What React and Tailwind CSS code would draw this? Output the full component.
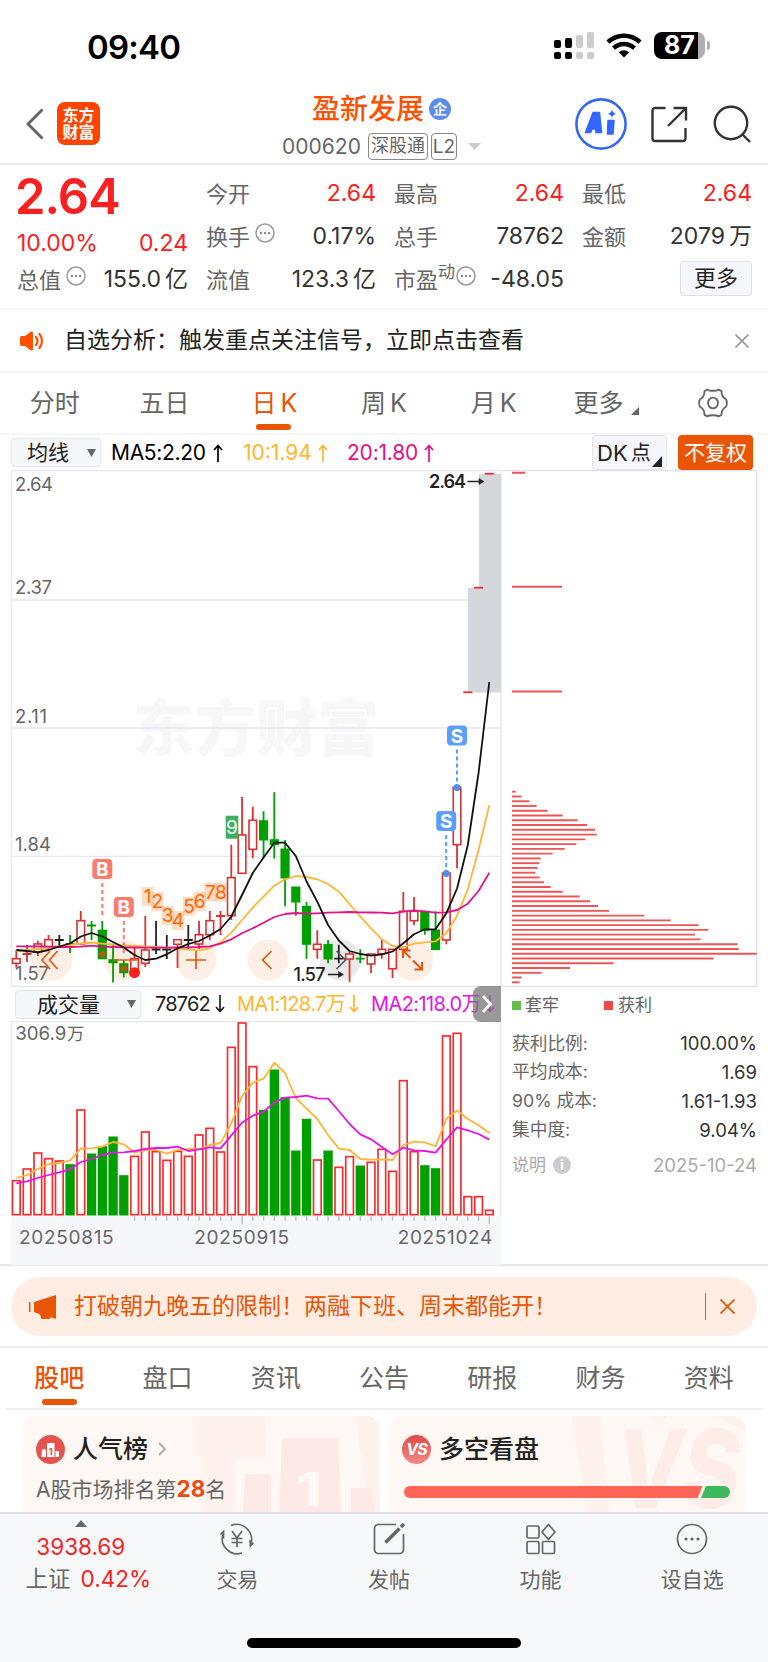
import React from 'react';

const UP = '#d93232';
const DOWN = '#00a000';
const FLAT = '#222222';

const STEP = 10.75;
const candleX = (i) => 16.3 + i * STEP;

// [kind, high, top, bottom, low] - u: up, d: down, x: flat
const candles = [
  ['u', 950, 958.7, 963.3, 967.7], ['u', 945, 954, 954, 962], ['u', 940.7, 944, 951.7, 956], ['u', 935, 939.7, 946.7, 950],
  ['x', 935, 940, 940, 948], ['d', 935, 944, 944, 953], ['u', 911, 920.7, 944, 944], ['d', 921, 925.5, 925.5, 940],
  ['d', 921, 930.5, 958.5, 958.5], ['d', 945, 960, 962.5, 982.5], ['d', 960, 964, 972.5, 977.5], ['u', 944.7, 958.7, 969, 972],
  ['u', 916, 950, 963.3, 967], ['x', 921, 949.5, 949.5, 954], ['x', 935, 949.5, 949.5, 959], ['u', 939.7, 939.7, 944.3, 968],
  ['x', 925, 940, 940, 949], ['u', 921, 934.7, 944, 949], ['u', 911, 920.7, 934.7, 940], ['u', 911, 916, 916, 935],
  ['u', 844.7, 877.7, 915.7, 920], ['u', 797, 835, 873.3, 873.3], ['u', 806.7, 820.3, 849.3, 858.3], ['d', 811.3, 821, 839.7, 858.3],
  ['d', 792.3, 840, 844.3, 858.7], ['d', 840, 849.3, 877.7, 906.3], ['d', 887.3, 887.3, 901.7, 915.7], ['d', 902, 906.7, 944, 958.7],
  ['u', 930.3, 944.3, 949.3, 958.7], ['d', 940, 944.7, 958.7, 963.3], ['x', 944.7, 958.7, 958.7, 963.3], ['u', 951.7, 954, 959, 982.3],
  ['d', 949.3, 958.7, 958.7, 963.3], ['u', 954, 954, 964, 973], ['u', 939.7, 949.3, 953.7, 958.7], ['u', 949.3, 949.3, 968.7, 978],
  ['u', 892, 911.3, 949.3, 949.3], ['u', 897, 911.3, 920.7, 925.3], ['d', 911.7, 911.7, 930, 934.7], ['d', 911.3, 930.3, 949.3, 949.3],
  ['u', 873, 873, 940, 944.3], ['u', 787.3, 787.3, 844.7, 868.3], ['u', 692.3, 692.3, 692.3, 692.3], ['u', 587.7, 587.7, 587.7, 587.7],
  ['u', 473.7, 473.7, 473.7, 473.7],
];

const ma5 = [950, 951, 952.3, 950, 946.5, 943.5, 936.5, 933, 936.5, 942, 947.5, 955, 960, 958.7, 954.3, 948.3, 944, 941, 935.5, 929, 916.5, 895, 873, 857.5, 842.7, 842.7, 856, 881.5, 901.7, 925, 940.5, 951, 954, 955.7, 954.3, 951.5, 943.3, 934.3, 929.3, 929.3, 913.3, 888.5, 845, 773, 682];
const ma10 = [951, 950, 949, 947.7, 946.3, 945, 943.5, 942.5, 943.7, 944.5, 945.5, 946, 946.5, 947, 947.7, 948.7, 949.7, 950.3, 948, 942.3, 932.7, 920, 907.5, 896.7, 885.7, 879.3, 876, 877, 879.3, 884, 891.7, 904, 916.7, 928.3, 939.3, 946, 947, 943.7, 942.3, 941.3, 933.3, 915.7, 889.3, 850, 805.3];
const ma20 = [946.3, 946.3, 946.3, 946.7, 947, 947, 946.7, 945.7, 946.7, 947, 947.3, 947.5, 947.7, 947.7, 947.7, 947.3, 947.3, 947, 946.3, 943.7, 939.3, 933.3, 928.3, 922.7, 917, 914, 913, 913.7, 913.3, 912.7, 912.3, 912, 912.3, 912.5, 912.7, 913.3, 911.7, 910.3, 911.3, 912.7, 912.3, 910, 903.7, 891, 872.7];

const chips = [47, 65, 88, 110, 143, 188, 233, 261, 285, 290, 256, 229, 194, 158, 122, 118, 113, 106, 119, 132, 152, 188, 239, 270, 294, 327, 433, 512, 596, 625, 585, 602, 713, 716, 770, 641, 341, 210, 125, 65, 59];

const volumes = [600, 565, 517, 534, 541, 553, 388, 521, 499, 470, 586, 527, 454, 513, 539, 512, 527, 463, 443, 514, 200, 127, 258, 390, 269, 352, 512, 417, 538, 512, 560, 528, 557, 545, 506, 572, 300, 513, 556, 565, 166, 158, 648, 648, 689];
const fallingDays = [5, 7, 8, 9, 10, 23, 24, 25, 26, 27, 29, 32, 38, 39];
const volMa1 = [594, 585, 567, 552, 549, 541, 506, 505, 500, 486, 493, 518, 510, 510, 521, 510, 507, 507, 495, 489, 430, 348, 308, 296, 248, 279, 354, 386, 417, 465, 506, 510, 537, 539, 538, 540, 495, 485, 487, 499, 417, 391, 417, 436, 459];
const volMa2 = [610, 604, 594, 585, 577, 568, 546, 537, 525, 518, 517, 513, 507, 504, 504, 500, 513, 508, 502, 505, 466, 428, 407, 395, 368, 353, 351, 347, 355, 356, 393, 432, 463, 478, 501, 523, 503, 511, 513, 518, 479, 442, 451, 462, 479];

const sequence = [
  ['1', 141.7, 887], ['2', 151.2, 892], ['3', 161.7, 906], ['4', 172.2, 911],
  ['5', 183, 896.7], ['6', 193.7, 892], ['7', 204.4, 882.5], ['8', 215, 882.5],
];

const toPoints = (values, getX) => values.map((y, i) => `${getX(i)},${y}`).join(' ');

const StatusBar = () => (
  <div className="flex h-[92px] items-start justify-between pl-[87px] pr-[58px] pt-[30px]">
    <span className="text-[33px] font-semibold leading-[34px] tracking-[-0.8px] text-black">09:40</span>
    <div className="flex items-center gap-[12px] pt-[2px]">
      <svg width="40" height="27" viewBox="0 0 40 27">
        <g fill="#000">
          <rect x="0" y="8" width="7" height="8" rx="2" />
          <rect x="11" y="6" width="7" height="10" rx="2" />
          <rect x="0" y="20" width="7" height="7" rx="2" />
          <rect x="11" y="20" width="7" height="7" rx="2" />
        </g>
        <g fill="#ccc">
          <rect x="22" y="3" width="7" height="13" rx="2" />
          <rect x="33" y="0" width="7" height="16" rx="2" />
          <rect x="22" y="20" width="7" height="7" rx="2" />
          <rect x="33" y="20" width="7" height="7" rx="2" />
        </g>
      </svg>
      <svg width="36" height="27" viewBox="0 0 36 27" fill="none" stroke="#000" strokeWidth="4.6">
        <path d="M2 10.2a23 23 0 0 1 32 0" />
        <path d="M7.6 16.2a15 15 0 0 1 20.8 0" />
        <path d="M18 25.5l-5.2-5.2a7.4 7.4 0 0 1 10.4 0z" fill="#000" stroke="none" />
      </svg>
      <div className="flex items-center gap-[2px]">
        <div className="flex h-[27px] w-[51px] items-center justify-center rounded-[8px] bg-[linear-gradient(90deg,#000_87%,#b0b0b0_87%)] text-[25px] font-bold leading-none text-white">
          87
        </div>
        <div className="h-[9px] w-[3px] rounded-r-full bg-[#b0b0b0]" />
      </div>
    </div>
  </div>
);

const Header = () => (
  <header className="grid h-[73px] grid-cols-[1fr_auto_1fr] border-b-2 border-[#e9e9eb] pl-[26px] pr-[17px]">
    <div className="flex items-start gap-[13px] pt-[10px]">
      <svg className="mt-[6px]" width="18" height="32" viewBox="0 0 18 32" fill="none" stroke="#666" strokeWidth="3">
        <path d="M16.5 1.5L2 16l14.5 14.5" />
      </svg>
      <div className="flex h-[43px] w-[43px] flex-col items-center justify-center rounded-[8px] bg-[#ff4400] text-[16px] font-bold leading-[17px] text-white">
        <span>东方</span>
        <span>财富</span>
      </div>
    </div>
    <div className="mr-[14px] flex flex-col items-center">
      <div className="flex h-[34px] items-center gap-[5px] text-[28px] font-medium leading-none text-[#ff5000]">
        盈新发展
        <span className="flex h-[22px] w-[22px] items-center justify-center rounded-full bg-[#5b8def] text-[14px] font-bold text-white">企</span>
      </div>
      <div className="flex h-[40px] items-center text-[21px] leading-none text-[#666]">
        <span>000620</span>
        <span className="ml-[7px] flex h-[27px] w-[60px] items-center justify-center rounded-[4px] border-[1.5px] border-[#888] text-[18px]">深股通</span>
        <span className="ml-[3px] flex h-[27px] w-[26px] items-center justify-center rounded-[4px] border-[1.5px] border-[#888] text-[19px]">L2</span>
        <svg className="ml-[11px]" width="13" height="7" viewBox="0 0 13 7"><path d="M0 0h13L6.5 7z" fill="#ccc" /></svg>
      </div>
    </div>
    <div className="flex items-start justify-end pt-[6px]">
      <svg width="52" height="52" viewBox="0 0 52 52">
        <circle cx="26" cy="26" r="24.6" fill="#fff" stroke="#3366ff" strokeWidth="2.6" />
        <path d="M10.500 34.500L18 14.500h6.500L26.500 34.500h-5.500l-.3-3.500h-3.700l-1.400 3.500zM18.700 26.500h1.800l-.3-5z" fill="#3366ff" fillRule="evenodd" stroke="#3366ff" strokeWidth="1.500" strokeLinejoin="round" />
        <path d="M33 22.500h6L38 36h-5.500z" fill="#3366ff" stroke="#3366ff" strokeWidth="1.500" strokeLinejoin="round" />
        <path d="M37 11.500c.8 2.700 1.600 3.500 4.200 4.300-2.600.8-3.400 1.600-4.200 4.300-.8-2.700-1.600-3.500-4.200-4.300 2.600-.8 3.400-1.600 4.200-4.300z" fill="#3366ff" />
      </svg>
      <svg className="ml-[24px] mt-[8px]" width="37" height="37" viewBox="0 0 37 37" fill="none" stroke="#333" strokeWidth="2.4">
        <path d="M14.5 2H4a2.500 2.500 0 0 0-2.500 2.500v28A2.500 2.500 0 0 0 4 35h28a2.500 2.500 0 0 0 2.500-2.500V22" />
        <path d="M22.500 2h12.500v12.500M35 2L17 20" />
      </svg>
      <svg className="ml-[25px] mt-[7px]" width="38" height="38" viewBox="0 0 38 38" fill="none" stroke="#333" strokeWidth="2.4">
        <circle cx="18" cy="18" r="16.200" />
        <path d="M29 29l8 8" />
      </svg>
    </div>
  </header>
);

const MoreDot = () => (
  <svg className="mb-[8px] ml-[5px] shrink-0" width="20" height="20" viewBox="0 0 20 20">
    <circle cx="10" cy="10" r="9" fill="none" stroke="#999" strokeWidth="1.500" />
    <g fill="#888">
      <circle cx="6" cy="10" r="1.200" />
      <circle cx="10" cy="10" r="1.200" />
      <circle cx="14" cy="10" r="1.200" />
    </g>
  </svg>
);

const Stat = ({ label, sup, dots, value, unit, red }) => (
  <div className="flex h-[43px] items-center whitespace-nowrap leading-none">
    <span className="text-[22px] text-[#666]">{label}</span>
    {sup && <span className="-mr-[4px] mb-[14px] text-[17px] text-[#666]">{sup}</span>}
    {dots && <MoreDot />}
    <span className={`ml-auto text-[23px] ${red ? 'text-[#fa2020]' : 'text-[#333]'}`}>
      {value}
      {unit && <span className="ml-[4px]">{unit}</span>}
    </span>
  </div>
);

const Quote = () => (
  <section className="flex h-[145px] gap-[18px] border-b-2 border-[#f5f5f7] pl-[17px] pr-[16px] pt-[7px]">
    <div className="w-[171px]">
      <div className="-ml-[2px] flex h-[50px] items-center pb-[2px] text-[49px] font-semibold leading-none tracking-[-1px] text-[#fa2020]">2.64</div>
      <div className="flex h-[36px] items-center justify-between pt-[6px] text-[23px] leading-none text-[#fa2020]">
        <span>10.00%</span>
        <span>0.24</span>
      </div>
      <Stat label="总值" dots value="155.0" unit="亿" />
    </div>
    <div className="w-[170px]">
      <Stat label="今开" value="2.64" red />
      <Stat label="换手" dots value="0.17%" />
      <Stat label="流值" value="123.3" unit="亿" />
    </div>
    <div className="w-[170px]">
      <Stat label="最高" value="2.64" red />
      <Stat label="总手" value="78762" />
      <Stat label="市盈" sup="动" dots value="-48.05" />
    </div>
    <div className="w-[170px]">
      <Stat label="最低" value="2.64" red />
      <Stat label="金额" value="2079" unit="万" />
      <div className="flex h-[40px] items-center justify-end">
        <button className="h-[35px] w-[72px] rounded-[4px] border-[1.500px] border-[#dfe1ea] bg-[#f6f7fa] text-[22px] leading-none text-[#222]">更多</button>
      </div>
    </div>
  </section>
);

const Notice = () => (
  <section className="flex h-[63px] items-center border-b-2 border-[#f5f5f7] pl-[20px] pr-[19px]">
    <svg width="24" height="20" viewBox="0 0 24 20">
      <path d="M0 6.500Q0 5 1.500 5H5l6-4.500Q13 0 13 2v16q0 2-2 1.500L5 15H1.500Q0 15 0 13.500z" fill="#ff5000" />
      <path d="M16 6q3 4 0 8M19.500 3q5 7 0 14" fill="none" stroke="#ff5000" strokeWidth="2.200" strokeLinecap="round" />
    </svg>
    <p className="ml-[20px] text-[23px] leading-none text-[#222]">自选分析：触发重点关注信号，立即点击查看</p>
    <svg className="ml-auto" width="14" height="14" viewBox="0 0 14 14" stroke="#999" strokeWidth="1.600"><path d="M.5.5l13 13M13.500.5l-13 13" /></svg>
  </section>
);

const PeriodTabs = () => (
  <nav className="grid h-[62px] grid-cols-7 border-b-2 border-[#f5f5f7] text-[25px] leading-none text-[#666]">
    <span className="flex items-center justify-center">分时</span>
    <span className="flex items-center justify-center">五日</span>
    <span className="relative flex items-center justify-center gap-[4px] text-[#ea5504]">
      日<span>K</span>
      <span className="absolute bottom-[3px] left-[37px] h-[6px] w-[35px] rounded-[3px] bg-[#ea5504]" />
    </span>
    <span className="flex items-center justify-center gap-[4px]">周<span>K</span></span>
    <span className="flex items-center justify-center gap-[4px]">月<span>K</span></span>
    <span className="flex items-center justify-center gap-[8px] pl-[6px]">
      更多
      <svg className="mt-[15px]" width="8" height="8" viewBox="0 0 8 8"><path d="M8 0v8H0z" fill="#666" /></svg>
    </span>
    <span className="flex items-center justify-center">
      <svg width="30" height="30" viewBox="0 0 30 28" preserveAspectRatio="none" fill="none" stroke="#666" strokeWidth="1.800" strokeLinejoin="round">
        <path d="M9.500 1.500c1.500 1.500 9.500 1.500 11 0l3 1.500c0 3 1.500 6 4.500 7.500 1 2 1 5 0 7-3 1.500-4.500 4.500-4.500 7.500l-3 1.500c-1.500-1.500-9.500-1.500-11 0l-3-1.500c0-3-1.500-6-4.500-7.500-1-2-1-5 0-7C5 9 6.500 6 6.500 3z" />
        <circle cx="15" cy="14" r="5" />
      </svg>
    </span>
  </nav>
);

const Arrow = ({ down }) => (
  <svg className={down ? 'rotate-180' : ''} width="10" height="18" viewBox="0 0 10 18" fill="none" stroke="currentColor" strokeWidth="1.700">
    <path d="M5 18V1.500M1 6l4-4.500L9 6" />
  </svg>
);

const Indicators = () => (
  <div className="flex h-[35px] items-center pl-[11px] pr-[15px] text-[21px] leading-none">
    <div className="flex h-[29px] w-[90px] items-center justify-between rounded-[4px] border-[1.500px] border-[#e2e4ec] bg-[#f6f7fa] pl-[15px] pr-[4px] text-[#222]">
      均线
      <svg width="9" height="8" viewBox="0 0 9 8"><path d="M0 0h9L4.500 8z" fill="#666" /></svg>
    </div>
    <div className="ml-[10px] flex w-[132px] items-center gap-[7px] text-black"><span className="tracking-[-0.3px]">MA5:2.20</span><Arrow /></div>
    <div className="flex w-[104px] items-center gap-[6px] text-[#ffb52e]"><span>10:1.94</span><Arrow /></div>
    <div className="flex items-center gap-[6px] text-[#e60f88]"><span className="tracking-[-0.2px]">20:1.80</span><Arrow /></div>
    <div className="relative ml-auto flex h-[35px] w-[75px] items-center rounded-[4px] border-[1.500px] border-[#e2e4ec] bg-[#f6f7fa] pl-[4px] text-[22px] text-[#222]">
      DK<span className="ml-[3px] text-[20px]">点</span>
      <svg className="absolute bottom-[2px] right-[4px]" width="10" height="11" viewBox="0 0 10 11"><path d="M10 0v11H0z" fill="#222" /></svg>
    </div>
    <div className="ml-[11px] flex h-[35px] w-[75px] items-center justify-center rounded-[4px] bg-[#ea5504] text-white">不复权</div>
  </div>
);

const Marker = ({ x, y, end, letter, color }) => (
  <g>
    <path d={`M${x} ${y + 14}V${end}`} stroke={color} strokeWidth="2" strokeDasharray="4 3" />
    <rect x={x - 10} y={y - 10} width="20" height="20" rx="4" fill={color} />
    <text x={x} y={y + 7} textAnchor="middle" fontSize="19" fontWeight="700" fill="#fff">{letter}</text>
  </g>
);

const PriceChart = () => (
  <svg className="block shrink-0" width="491" height="517" viewBox="11 470 491 517">
    <text x="133" y="751" fontSize="61.500" fontWeight="900" fill="#f7f7f7">东方财富</text>
    <g fill="none" stroke="#e6e7ee" strokeWidth="1.300">
      <path d="M11 470.600H502M11.600 470V987M11 986.300H502M501 470V987" />
      <path d="M11 600H501M11 728H501M11 856.300H501" />
    </g>
    <rect x="479" y="474" width="22" height="114" fill="#d4d7dc" />
    <rect x="468" y="588" width="33" height="104.500" fill="#d4d7dc" />

    {/* round chart controls sit behind the candles */}
    <g fill="#fdece2" fillOpacity="0.850">
      <circle cx="51.700" cy="960" r="20.500" />
      <circle cx="124" cy="960" r="20.500" />
      <circle cx="196" cy="960" r="20.500" />
      <circle cx="268" cy="960" r="20.500" />
      <circle cx="412.500" cy="960" r="20.500" />
      <circle cx="340.500" cy="960" r="20.500" fill="#e6e6e6" />
    </g>

    {candles.map(([kind, high, top, bottom, low], i) => {
      const x = candleX(i);
      const color = kind === 'u' ? UP : kind === 'd' ? DOWN : FLAT;
      if (bottom - top < 0.1) {
        return <path key={i} d={`M${x} ${high}V${low}M${x - 4.500} ${top}h9`} stroke={color} strokeWidth="1.800" />;
      }
      return (
        <g key={i} stroke={color} strokeWidth="1.600">
          <path d={`M${x} ${high}V${top}M${x} ${bottom}V${low}`} strokeWidth="1.800" />
          <rect x={x - 3.800} y={top} width="7.600" height={bottom - top} fill={kind === 'u' ? '#fff' : color} />
        </g>
      );
    })}

    <g fontSize="18.500" fill="#666">
      <text x="15" y="491" textLength="38">2.64</text>
      <text x="15" y="594" textLength="37">2.37</text>
      <text x="15" y="723" textLength="32">2.11</text>
      <text x="15" y="851" textLength="36">1.84</text>
      <text x="15" y="980" textLength="34">1.57</text>
    </g>

    <g fill="none" strokeWidth="1.800" strokeLinejoin="round">
      <polyline points={toPoints(ma10, candleX)} stroke="#ffb535" />
      <polyline points={toPoints(ma20, candleX)} stroke="#e0128c" />
      <polyline points={toPoints(ma5, candleX)} stroke="#111" />
    </g>

    <Marker x={102.300} y={869} end={918} letter="B" color="#ff7a6b" />
    <Marker x={123.800} y={907} end={953} letter="B" color="#ff7a6b" />
    <Marker x={457} y={735.500} end={785} letter="S" color="#5a9eff" />
    <Marker x={446.200} y={821} end={872} letter="S" color="#5a9eff" />
    <circle cx="457" cy="787.500" r="3.500" fill="#4a90ee" />
    <circle cx="446.200" cy="873.500" r="3.500" fill="#4a90ee" />
    <circle cx="102.300" cy="954" r="3.300" fill="#b5541c" />
    <circle cx="123.800" cy="968.500" r="3.300" fill="#b5541c" />
    <circle cx="134.500" cy="972.700" r="5.500" fill="#fa2020" />

    {sequence.map(([n, x, y]) => (
      <g key={n}>
        <rect x={x} y={y} width="12.200" height="19" fill="#ff9a5c" fillOpacity="0.350" />
        <text x={x + 6} y={y + 16} textAnchor="middle" fontSize="19" fill="#ff6600">{n}</text>
      </g>
    ))}
    <rect x="225.700" y="815.700" width="12.600" height="23" fill="#3cb061" />
    <text x="232" y="834" textAnchor="middle" fontSize="19" fill="#fff">9</text>

    <g fill="none" stroke="#ea5504" strokeWidth="1.700">
      <path d="M50 951l-8 9 8 9M57.500 951l-8 9 8 9" />
      <path d="M113.500 960h23.500M186 960h20M196 951v18" />
      <path d="M271.500 951l-9 9 9 9" />
      <path d="M403 958v-7.500h7.500M403.500 951l7 7M414.500 969.500h7.500V962M421.500 969l-8.500-8.500" strokeWidth="2" />
      <path d="M336.500 951l9 9-9 9" stroke="#555" />
    </g>

    <g fontSize="18" fontWeight="600" fill="#222">
      <text x="429" y="488" textLength="37">2.64</text>
      <text x="293.500" y="981" textLength="32" fontWeight="500">1.57</text>
    </g>
    <g stroke="#222" strokeWidth="1.500" fill="#222">
      <path d="M467.500 481.500h12M328 974.500h11" />
      <path d="M479 478.500l5 3-5 3zM338.500 971.500l5 3-5 3z" strokeWidth="0.500" />
    </g>
  </svg>
);

const ChipChart = () => (
  <svg className="block shrink-0" width="256" height="517" viewBox="502 470 256 517">
    <path d="M502 470.600H756.600V986.300H502" fill="none" stroke="#dfe0ea" strokeWidth="1.300" />
    <g stroke="#ee5555" strokeWidth="1.900">
      <path d="M512 472.700h13M512 586.700h50M512 691.500h50" />
      {chips.map((end, i) => (
        <path key={i} d={`M512 ${791.700 + i * 4.765}H${500 + end / 3}`} />
      ))}
    </g>
  </svg>
);

const volumeX = (i) => 49 + i * 32.250;

const VolumeChart = () => (
  <svg className="block" width="490" height="244" viewBox="33 123 1470 732">
    <rect x="33" y="708" width="1470" height="147" fill="#f6f7fb" />
    <path d="M33 125H1503M35 125V708M1501 125V708" fill="none" stroke="#e6e7ee" strokeWidth="4" />
    {volumes.map((top, i) => {
      const falling = fallingDays.includes(i);
      return (
        <rect
          key={i}
          x={volumeX(i) - 11.500}
          y={top + 2}
          width="23"
          height={702 - top}
          fill={falling ? DOWN : '#fff'}
          stroke={falling ? DOWN : '#fa2a2a'}
          strokeWidth="5"
        />
      );
    })}
    <text x="46" y="179" fontSize="56" fill="#666">306.9</text>
    <text x="201" y="179" fontSize="52" fill="#666">万</text>
    <g fill="none" strokeWidth="5.400" strokeLinejoin="round">
      <polyline points={toPoints(volMa1, volumeX)} stroke="#ffb535" />
      <polyline points={toPoints(volMa2, volumeX)} stroke="#e515e5" />
    </g>
    <g stroke="#bbb" strokeWidth="4">
      {volumes.map((_, i) => i > 10 && <path key={i} d={`M${volumeX(i)} 709V${i === 21 || i === 44 ? 733 : 722}`} />)}
    </g>
    <g fontSize="57" fill="#666">
      <text x="57" y="792" textLength="284">20250815</text>
      <text x="583" y="792" textLength="284">20250915</text>
      <text x="1193" y="792" textLength="284">20251024</text>
    </g>
  </svg>
);

const VolumeHeader = () => (
  <div className="relative flex h-[34px] items-center pl-[4px] text-[20px] leading-none">
    <div className="flex h-[29px] w-[126px] items-center justify-between rounded-[4px] border-[1.500px] border-[#e2e4ec] bg-[#f6f7fa] pl-[21px] pr-[4px] text-[21px] text-[#222]">
      成交量
      <svg width="9" height="8" viewBox="0 0 9 8"><path d="M0 0h9L4.500 8z" fill="#666" /></svg>
    </div>
    <div className="ml-[14px] flex w-[82px] items-center justify-between pr-[12px] text-[#222]"><span className="tracking-[-0.800px]">78762</span><Arrow down /></div>
    <div className="flex w-[134px] items-center justify-between pr-[12px] text-[#ffb52e]"><span className="whitespace-nowrap tracking-[-0.600px]">MA1:128.7万</span><Arrow down /></div>
    <div className="flex w-[124px] items-center justify-between text-[#e515e5]"><span className="whitespace-nowrap tracking-[-0.600px]">MA2:118.0万</span><Arrow down /></div>
    <div className="absolute -top-px right-0 flex h-[36px] w-[28px] items-center justify-center rounded-l-[8px] bg-[#777]/75">
      <svg width="10" height="18" viewBox="0 0 10 18" fill="none" stroke="#fff" strokeWidth="2.800"><path d="M1 1l7.500 8L1 17" /></svg>
    </div>
  </div>
);

const costs = [
  ['获利比例:', '100.00%'],
  ['平均成本:', '1.69'],
  ['90% 成本:', '1.61-1.93'],
  ['集中度:', '9.04%'],
];

const CostPanel = () => (
  <div className="flex-1 pl-[11px] pr-[11px] text-[18px] leading-none text-[#666]">
    <div className="flex h-[37px] items-center text-[17px]">
      <span className="mr-[4px] h-[9px] w-[9px] bg-[#5fbf48]" />
      <span className="mr-[45px]">套牢</span>
      <span className="mr-[5px] h-[9px] w-[9px] bg-[#ee4848]" />
      获利
    </div>
    <div className="pt-[5px]">
      {costs.map(([label, value]) => (
        <div key={label} className="flex h-[28.800px] items-center justify-between">
          <span className="text-[17.700px]">{label}</span>
          <span className="text-[18.500px] text-[#333]">{value}</span>
        </div>
      ))}
    </div>
    <div className="flex h-[42px] items-center text-[#aaa]">
      <span className="text-[17px]">说明</span>
      <span className="ml-[7px] flex h-[18px] w-[18px] items-center justify-center rounded-full bg-[#ccc] text-[14px] font-bold text-white">i</span>
      <span className="ml-auto text-[18.500px]">2025-10-24</span>
    </div>
  </div>
);

const Banner = () => (
  <section className="h-[82px] border-b-2 border-[#ebebed] px-[11px] pt-[11px]">
    <div className="flex h-[59px] items-center rounded-full bg-[#ffede4] pl-[17px] pr-[22px] text-[#ea5504]">
      <svg width="28" height="24" viewBox="0 0 28 24" fill="#ea5504">
        <path d="M1 7h1.500v10H1zM6 7L28 0v24l-5-1.800-1.500 1.800h-8L12 19.500 6 17z" />
      </svg>
      <p className="ml-[18px] text-[23px] leading-none">打破朝九晚五的限制！两融下班、周末都能开！</p>
      <span className="ml-auto h-[27px] w-[1.500px] bg-[#ea5504]" />
      <svg className="ml-[14px]" width="15" height="15" viewBox="0 0 15 15" stroke="#ea5504" strokeWidth="1.700"><path d="M.5.5l14 14M14.500.5l-14 14" /></svg>
    </div>
  </section>
);

const sections = ['股吧', '盘口', '资讯', '公告', '研报', '财务', '资料'];

const SectionTabs = () => (
  <nav className="mx-[5px] grid h-[62px] grid-cols-7 border-b-2 border-[#efeff4] text-[25px] leading-none text-[#666]">
    {sections.map((name, i) => (
      <span key={name} className={`relative flex items-center justify-center ${i === 0 ? 'font-medium text-[#ea5504]' : ''}`}>
        {name}
        {i === 0 && <span className="absolute bottom-[3px] left-[37px] h-[6px] w-[35px] rounded-[3px] bg-[#ea5504]" />}
      </span>
    ))}
  </nav>
);

const Cards = () => (
  <section className="flex h-[102px] gap-[8px] overflow-hidden px-[22px] pt-[6px]">
    <div className="relative h-[120px] w-[358px] overflow-hidden rounded-[14px] bg-[#fff8f5] pl-[14px] pt-[15px]">
      <svg className="absolute left-[171px] top-0" width="187" height="100" viewBox="0 0 187 100">
        <path d="M0 0h73v43H42v57H8V40H0zM162 0h25v100h-10z" fill="#fff1ee" />
        <path d="M52 58h26v42H50zM89 22h56l3 78H86zM158 72h20l4 28h-24z" fill="#fde9e5" />
        <text x="103" y="90" fontSize="46" fontWeight="800" fill="#fff8f5" textLength="26" lengthAdjust="spacingAndGlyphs">1</text>
      </svg>
      <div className="relative flex h-[36px] items-center text-[25px] font-medium leading-none text-[#222]">
        <svg width="29" height="29" viewBox="0 0 29 29">
          <circle cx="14.500" cy="14.500" r="14.500" fill="#e5534f" />
          <path d="M6 14.500h4V22H5.500zM11 8h7.500v14H11zM19.500 16h3.500v6h-3.500z" fill="#fff" />
          <text x="14.700" y="19.500" textAnchor="middle" fontSize="9" fontWeight="800" fill="#e5534f">1</text>
        </svg>
        <span className="ml-[8px]">人气榜</span>
        <svg className="ml-[10px]" width="9" height="14" viewBox="0 0 9 14" fill="none" stroke="#aaa" strokeWidth="1.800"><path d="M1 1l6 6-6 6" /></svg>
      </div>
      <p className="relative mt-[10px] text-[21px] leading-[24px] text-[#666]">
        A股市场排名第<b className="text-[22.500px] text-[#ea4a10]">28</b>名
      </p>
    </div>
    <div className="relative h-[120px] w-[358px] overflow-hidden rounded-[14px] bg-[#fff8f5] pl-[14px] pt-[15px]">
      <svg className="absolute left-[178px] top-0" width="180" height="100" viewBox="0 0 180 100">
        <path d="M5 0h30l8 100H22zM80 0h22l-9 8zM150 0h30v16z" fill="#fff1ee" />
        <text x="50" y="92" fontSize="108" fontWeight="800" fontStyle="italic" fill="#fdece8" textLength="124" lengthAdjust="spacingAndGlyphs">VS</text>
      </svg>
      <div className="relative flex h-[36px] items-center text-[25px] font-medium leading-none text-[#222]">
        <span className="flex h-[29px] w-[29px] items-center justify-center rounded-full bg-[linear-gradient(#df4a49,#f28a85)] text-[16px] font-bold italic tracking-[-1px] text-white">VS</span>
        <span className="ml-[8px]">多空看盘</span>
      </div>
      <svg className="relative ml-[2px] mt-[19px]" width="326" height="12" viewBox="0 0 326 12">
        <path d="M6 0H298.500L293.500 12H6A6 6 0 0 1 6 0z" fill="#ff6457" />
        <path d="M302 0H320a6 6 0 0 1 0 12H297z" fill="#3cba5c" />
      </svg>
    </div>
  </section>
);

const NavItem = ({ label, children }) => (
  <div className="flex w-[152px] flex-col items-center pt-[8px]">
    <svg width="36" height="34" viewBox="0 0 36 34" fill="none" stroke="#666" strokeWidth="1.700">{children}</svg>
    <span className="mt-[13px] text-[21px] leading-[22px] text-[#666]">{label}</span>
  </div>
);

const BottomBar = () => (
  <footer className="h-[150px] border-t-2 border-[#e3e4e7] bg-[#f7f8fa]">
    <div className="flex h-[85px]">
      <div className="flex w-[162px] flex-col items-center pt-[6px] text-[22.500px] leading-none text-[#fa2020]">
        <svg width="12" height="7" viewBox="0 0 12 7"><path d="M6 0l6 7H0z" fill="#666" /></svg>
        <span className="mt-[9px]">3938.69</span>
        <span className="mt-[9px] flex items-center gap-[10px] pl-[15px]"><span className="text-[#666]">上证</span><span>0.42%</span></span>
      </div>
      <NavItem label="交易">
        <path d="M12 3.500A15 15 0 0 1 31.500 23M23 31A15 15 0 0 1 4.500 11" />
        <path d="M1.500 12.500l3-3v7M34.500 20.500l-3 3.500-.500-6" />
        <path d="M13 9l5 7 5-7M12.500 16.500h11M12.500 20.500h11M18 16v9" />
      </NavItem>
      <NavItem label="发帖">
        <path d="M25 2.500H7A4 4 0 0 0 3.500 6v22A4 4 0 0 0 7 31.500h22a4 4 0 0 0 3.500-3.500V12" />
        <path d="M14.500 20.500L28.500 6.500" strokeWidth="3.500" />
        <path d="M30 5l3-3" strokeWidth="3.500" />
      </NavItem>
      <NavItem label="功能">
        <rect x="4" y="4" width="12" height="12" rx="1.500" />
        <path d="M25.500 2.500l6.500 7.500-6.500 7.500L19 10z" strokeLinejoin="round" />
        <rect x="4" y="19.500" width="12" height="12" rx="1.500" />
        <rect x="19.500" y="19.500" width="12" height="12" rx="1.500" />
      </NavItem>
      <NavItem label="设自选">
        <circle cx="18" cy="17" r="14.500" />
        <g fill="#666" stroke="none">
          <circle cx="12" cy="17" r="1.600" />
          <circle cx="18" cy="17" r="1.600" />
          <circle cx="24" cy="17" r="1.600" />
        </g>
      </NavItem>
    </div>
    <div className="mx-auto mt-[39px] h-[10px] w-[274px] rounded-full bg-black" />
  </footer>
);

const App = () => (
  <div className="h-[1662px] w-[768px] overflow-hidden bg-white font-['Inter','Noto_Sans_CJK_SC',sans-serif]">
    <StatusBar />
    <Header />
    <Quote />
    <Notice />
    <PeriodTabs />
    <Indicators />
    <div className="flex pl-[11px]">
      <PriceChart />
      <ChipChart />
    </div>
    <div className="flex h-[279px] border-b-2 border-[#e6e7eb] pl-[11px]">
      <div className="w-[490px]">
        <VolumeHeader />
        <VolumeChart />
      </div>
      <CostPanel />
    </div>
    <Banner />
    <SectionTabs />
    <Cards />
    <BottomBar />
  </div>
);

export default App;
